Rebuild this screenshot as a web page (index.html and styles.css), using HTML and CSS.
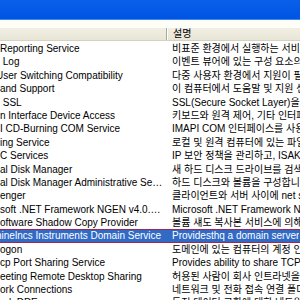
FILE: index.html
```html
<!DOCTYPE html>
<html lang="ko">
<head>
  <meta charset="UTF-8" />
  <title>서비스</title>
  <link rel="stylesheet" href="styles.css">
</head>
<body>

  <div class="titlebar"></div>
  <div class="toolbar"></div>

  <div class="header">
    <div class="name"></div>
    <div class="desc">설명</div>
  </div>

  <div class="list">
    <div class="row"><div class="name">Reporting Service</div><div class="desc">비표준 환경에서 실행하는 서비스를 보고합니다.</div></div>
    <div class="row"><div class="name">&nbsp;Log</div><div class="desc">이벤트 뷰어에 있는 구성 요소의 이벤트 로그</div></div>
    <div class="row"><div class="name cut">User Switching Compatibility</div><div class="desc">다중 사용자 환경에서 지원이 필요한 응용</div></div>
    <div class="row"><div class="name">and Support</div><div class="desc">이 컴퓨터에서 도움말 및 지원 센터를 실행</div></div>
    <div class="row"><div class="name">&nbsp;SSL</div><div class="desc">SSL(Secure Socket Layer)을 사용하는</div></div>
    <div class="row"><div class="name">n Interface Device Access</div><div class="desc">키보드와 원격 제어, 기타 인터페이스 장치</div></div>
    <div class="row"><div class="name">I CD-Burning COM Service</div><div class="desc">IMAPI COM 인터페이스를 사용하여</div></div>
    <div class="row"><div class="name">ing Service</div><div class="desc">로컬 및 원격 컴퓨터에 있는 파일의 색인</div></div>
    <div class="row"><div class="name">C Services</div><div class="desc">IP 보안 정책을 관리하고, ISAKMP/Oakley</div></div>
    <div class="row"><div class="name">al Disk Manager</div><div class="desc">새 하드 디스크 드라이브를 검색하고</div></div>
    <div class="row"><div class="name">al Disk Manager Administrative Service</div><div class="desc">하드 디스크와 볼륨을 구성합니다.</div></div>
    <div class="row"><div class="name">enger</div><div class="desc">클라이언트와 서버 사이에 net send</div></div>
    <div class="row"><div class="name">soft .NET Framework NGEN v4.0.30319_X86</div><div class="desc">Microsoft .NET Framework NGEN</div></div>
    <div class="row"><div class="name">oftware Shadow Copy Provider</div><div class="desc">볼륨 섀도 복사본 서비스에 의해 사용</div></div>
    <div class="row selected"><div class="name cut">hinelncs Instruments Domain Service</div><div class="desc">Providesthq a domain server</div></div>
    <div class="row"><div class="name">ogon</div><div class="desc">도메인에 있는 컴퓨터의 계정 인증</div></div>
    <div class="row"><div class="name">cp Port Sharing Service</div><div class="desc">Provides ability to share TCP ports</div></div>
    <div class="row"><div class="name">eeting Remote Desktop Sharing</div><div class="desc">허용된 사람이 회사 인트라넷을 사용</div></div>
    <div class="row"><div class="name">ork Connections</div><div class="desc">네트워크 및 전화 접속 연결 폴더의</div></div>
    <div class="row"><div class="name">ork DDE</div><div class="desc">동적 데이터 교환에 대한 네트워크 전송</div></div>
  </div>

</body>
</html>
```

FILE: styles.css
```css
body {
  margin: 0;
  width: 300px;
  height: 300px;
  overflow: hidden;
  background-color: #fff;
  font-family: "Liberation Sans", "Noto Sans CJK KR", sans-serif;
  font-size: 10px;
  color: #000;
}

.titlebar {
  height: 19px;
  background: linear-gradient(#0a5fea, #0054e3);
  border-bottom: 1px solid #3d87f0;
}

.toolbar {
  height: 8px;
  background-color: #fefef8;
}

.header {
  display: flex;
  height: 12px;
  line-height: 12px;
  background: linear-gradient(#f0efe4, #e8e6d6);
  border-bottom: 1px solid #d6d2c0;
}

.header .name {
  width: 166px;
  flex: none;
  border-right: 1px solid #aca899;
}

.header .desc {
  padding-left: 5px;
  border-left: 1px solid #fff;
}

.list {
  padding-top: 1px;
}

.row {
  display: flex;
  height: 13.4px;
  line-height: 13.4px;
  white-space: nowrap;
}

.row .name {
  width: 163px;
  flex: none;
  padding-right: 4px;
  overflow: hidden;
  text-overflow: ellipsis;
}

.row .name.cut {
  text-indent: -4px;
}

.row .desc {
  padding-left: 5px;
  overflow: hidden;
}

.row.selected {
  background-color: #316ac5;
  color: #fff;
  box-shadow: inset 0 1px 0 #a02850, inset 0 -1px 0 #a02850;
}
```
